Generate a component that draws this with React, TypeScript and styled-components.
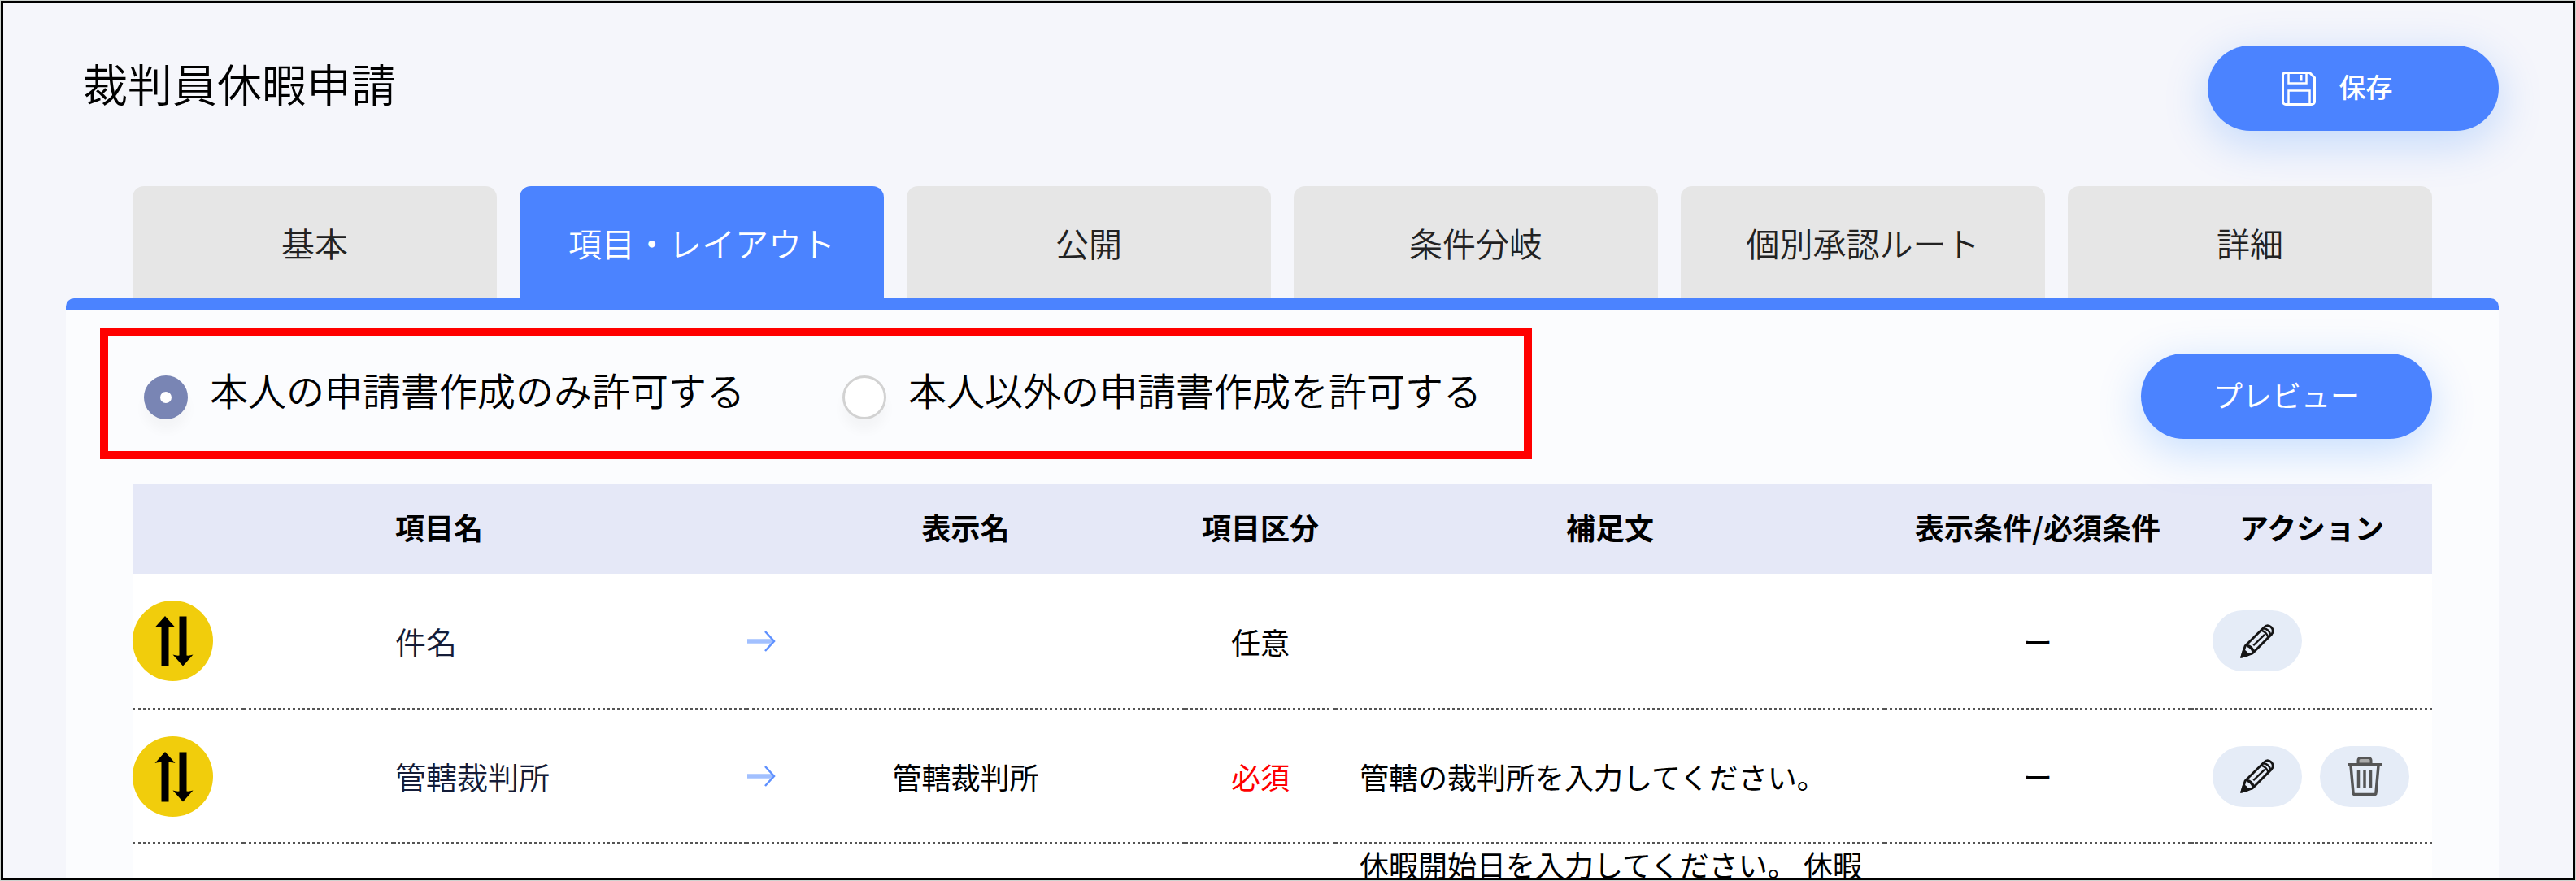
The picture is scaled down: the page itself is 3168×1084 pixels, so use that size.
import React, { useState } from "react";
import styled, { createGlobalStyle } from "styled-components";

const BLUE = "#4b83ff";

const GlobalStyle = createGlobalStyle`
  *, *::before, *::after { box-sizing: border-box; }
  body {
    margin: 0;
    color: #000;
    font-family: "Noto Sans CJK JP", sans-serif;
    font-size: 36px;
    font-weight: 400;
    line-height: 48px;
  }
  button { font: inherit; border: 0; padding: 0; cursor: pointer; }
`;

const Frame = styled.div`
  height: 100vh;
  border: 1px solid #ccd2ce;
  overflow: hidden;
`;

const Page = styled.main`
  height: 100%;
  border: 3px solid #000;
  background: #f5f6fb;
  padding: 52px 91px 0 77px;
  overflow: hidden;
`;

const Header = styled.header`
  display: flex;
  justify-content: space-between;
  align-items: flex-start;
  padding-left: 21px;
  margin-bottom: 68px;
`;

const Title = styled.h1`
  margin: 0;
  font-size: 55px;
  font-weight: 350;
  line-height: 90px;
`;

const PrimaryButton = styled.button<{ $withIcon?: boolean }>`
  display: flex;
  align-items: center;
  justify-content: center;
  gap: 29px;
  flex: none;
  width: 358px;
  height: 105px;
  padding-right: ${(p) => (p.$withIcon ? "40px" : "0")};
  border-radius: 53px;
  background: ${BLUE};
  color: #fff;
  box-shadow: 0 14px 55px rgba(0, 110, 255, 0.22);
`;

const ButtonLabel = styled.span<{ $strong?: boolean }>`
  padding-bottom: 6px;
  font-size: ${(p) => (p.$strong ? "33px" : "36px")};
  font-weight: ${(p) => (p.$strong ? 500 : 400)};
`;

const TabBar = styled.nav`
  display: grid;
  grid-template-columns: repeat(6, 1fr);
  gap: 28px;
  padding: 0 82px;
`;

const Tab = styled.button<{ $active: boolean }>`
  height: 138px;
  border-radius: 14px 14px 0 0;
  font-size: 41px;
  font-weight: 350;
  background: ${(p) => (p.$active ? BLUE : "#e6e6e6")};
  color: ${(p) => (p.$active ? "#fff" : "#222")};
`;

const Panel = styled.section`
  min-height: 100%;
  border-top: 14px solid ${BLUE};
  border-radius: 10px 10px 0 0;
  background: #fbfcfe;
  padding: 22px 82px 0 42px;
`;

const Toolbar = styled.div`
  display: flex;
  justify-content: space-between;
  align-items: flex-start;
  margin-bottom: 30px;
`;

const PreviewSlot = styled.div`
  padding-top: 32px;
`;

const RadioGroup = styled.fieldset`
  display: flex;
  gap: 120px;
  margin: 0;
  border: 10px solid #f00;
  padding: 29px 52px 39px 44px;
`;

const RadioLabel = styled.label`
  display: flex;
  align-items: flex-end;
  gap: 27px;
  font-size: 47px;
  font-weight: 350;
  line-height: 74px;
  white-space: nowrap;
  cursor: pointer;
`;

const Radio = styled.input`
  appearance: none;
  flex: none;
  width: 54px;
  height: 54px;
  margin: 0;
  border: 3px solid #d2d2d2;
  border-radius: 50%;
  background: #fff;
  box-shadow: 0 14px 14px rgba(0, 0, 0, 0.03);

  &:checked {
    border: 20px solid #7985b4;
  }
`;

const TableArea = styled.div`
  padding-left: 40px;
`;

const Table = styled.table`
  width: 100%;
  table-layout: fixed;
  border-collapse: separate;
  border-spacing: 0;
  background: #fff;
`;

const Col = styled.col<{ $w?: number }>`
  width: ${(p) => (p.$w ? `${p.$w}px` : "auto")};
`;

const HeadCell = styled.th<{ $left?: boolean }>`
  height: 111px;
  padding: 0 2px 6px;
  background: #e5e8f7;
  text-align: ${(p) => (p.$left ? "left" : "center")};
  font-weight: 700;
`;

const Row = styled.tr`
  &:first-child > td { height: 168px; }
`;

const Cell = styled.td<{ $left?: boolean }>`
  height: 165px;
  padding: 0 2px;
  border-bottom: 3px dotted #555;
  text-align: ${(p) => (p.$left ? "left" : "center")};
`;

const HandleCell = styled(Cell)`
  padding: 0;
`;

const NameCell = styled(Cell)`
  font-size: 38px;
  font-weight: 350;
  color: #141c38;
`;

const NoteCell = styled(Cell)<{ $top?: boolean }>`
  padding: 0 20px 0 29px;
  vertical-align: ${(p) => (p.$top ? "top" : "middle")};
`;

const DisplayName = styled.div`
  display: grid;
  grid-template-columns: 36px 1fr 36px;
  align-items: center;
`;

const Kind = styled.span<{ $required: boolean }>`
  color: ${(p) => (p.$required ? "#f00" : "#000")};
`;

const Handle = styled.button`
  display: block;
  width: 99px;
  height: 99px;
  border-radius: 50%;
  background: #f1cd0c;
  cursor: grab;
`;

const Actions = styled.div`
  display: flex;
  gap: 22px;
  padding-left: 24px;
`;

const ActionButton = styled.button`
  display: flex;
  align-items: center;
  justify-content: center;
  width: 110px;
  height: 75px;
  border-radius: 38px;
  background: #e5ecf7;
`;

const SaveIcon = () => (
  <svg width="42" height="42" viewBox="0 0 42 42" fill="none" stroke="#fff" strokeWidth="3">
    <path d="M4.500 1.500h30l6 6V37a3.500 3.500 0 0 1-3.500 3.500H5A3.500 3.500 0 0 1 1.500 37V4.500a3 3 0 0 1 3-3z" />
    <path d="M8.500 2v12.500h22V2" strokeWidth="2.500" />
    <path d="M24 4v7.500" />
    <path d="M8.500 40V23.500h26V40" strokeWidth="2.500" />
  </svg>
);

const SortIcon = () => (
  <svg width="99" height="99" viewBox="0 0 99 99" fill="#000">
    <path d="M40 19L52.500 33Q48 31.500 44.500 32V80.500h-9V32Q32 31.500 27.500 33z" />
    <path d="M57.500 19.500h9V67.500Q70 68 74.500 66.500L62 80.500 49.500 66.500Q54 68 57.500 67.500z" />
  </svg>
);

const ArrowIcon = () => (
  <svg width="36" height="28" viewBox="0 0 36 28" fill="none">
    <path d="M1 14h31" stroke="#a2c0ff" strokeWidth="5.500" />
    <path d="M23 2L34 14 23 26" stroke="#5f91ff" strokeWidth="2.500" />
  </svg>
);

const PencilIcon = () => (
  <svg width="42" height="42" viewBox="0 0 44 44" fill="none" stroke="#151515" strokeWidth="3">
    <path d="M2 42L6.500 28 31 4C33.500 1 37 1 40 4s3 7 0 9.500L16 37.500z" strokeLinejoin="round" />
    <path d="M0 44L3.500 32Q9 34 12 40.500z" fill="#151515" stroke="none" />
    <path d="M8.500 27.500Q15 29 17 35.500" strokeWidth="4" />
    <path d="M30 5.500q8 1 9 9" strokeWidth="2.500" />
    <path d="M27 8q7 2 9 9" strokeWidth="2.500" />
    <path d="M17 27.500L31.500 13.500" strokeWidth="2.500" />
  </svg>
);

const TrashIcon = () => (
  <svg width="44" height="48" viewBox="0 0 44 48" fill="none" stroke="#555" strokeWidth="3">
    <path d="M14 9V4.500A3 3 0 0 1 17 1.500h10a3 3 0 0 1 3 3V9z" fill="#aaa" />
    <path d="M1 10h42" strokeWidth="4" />
    <path d="M5 11l3 33.500a2 2 0 0 0 2 2h24a2 2 0 0 0 2-2L39 11" strokeWidth="3.500" />
    <path d="M14.500 17v21M22 17v21M29.500 17v21" strokeWidth="3.500" />
  </svg>
);

const TABS = ["基本", "項目・レイアウト", "公開", "条件分岐", "個別承認ルート", "詳細"];

const SCOPES = [
  { id: "self", label: "本人の申請書作成のみ許可する" },
  { id: "others", label: "本人以外の申請書作成を許可する" },
];

type Item = { name: string; display: string; required: boolean; note: string; removable: boolean };

const ITEMS: Item[] = [
  { name: "件名", display: "", required: false, note: "", removable: false },
  {
    name: "管轄裁判所",
    display: "管轄裁判所",
    required: true,
    note: "管轄の裁判所を入力してください。",
    removable: true,
  },
];

export default function App() {
  const [tab, setTab] = useState(1);
  const [scope, setScope] = useState("self");

  return (
    <Frame>
      <GlobalStyle />
      <Page>
        <Header>
          <Title>裁判員休暇申請</Title>
          <PrimaryButton type="button" $withIcon>
            <SaveIcon />
            <ButtonLabel $strong>保存</ButtonLabel>
          </PrimaryButton>
        </Header>
        <TabBar>
          {TABS.map((label, i) => (
            <Tab key={label} type="button" $active={i === tab} onClick={() => setTab(i)}>
              {label}
            </Tab>
          ))}
        </TabBar>
        <Panel>
          <Toolbar>
            <RadioGroup>
              {SCOPES.map((s) => (
                <RadioLabel key={s.id} htmlFor={s.id}>
                  <Radio
                    type="radio"
                    name="scope"
                    id={s.id}
                    checked={scope === s.id}
                    onChange={() => setScope(s.id)}
                  />
                  {s.label}
                </RadioLabel>
              ))}
            </RadioGroup>
            <PreviewSlot>
              <PrimaryButton type="button">
                <ButtonLabel>プレビュー</ButtonLabel>
              </PrimaryButton>
            </PreviewSlot>
          </Toolbar>
          <TableArea>
            <Table>
              <colgroup>
                <Col $w={136} />
                <Col $w={185} />
                <Col $w={434} />
                <Col $w={539} />
                <Col $w={186} />
                <Col />
                <Col $w={378} />
                <Col $w={296} />
              </colgroup>
              <thead>
                <tr>
                  <HeadCell />
                  <HeadCell />
                  <HeadCell $left>項目名</HeadCell>
                  <HeadCell>表示名</HeadCell>
                  <HeadCell>項目区分</HeadCell>
                  <HeadCell>補足文</HeadCell>
                  <HeadCell>表示条件/必須条件</HeadCell>
                  <HeadCell>アクション</HeadCell>
                </tr>
              </thead>
              <tbody>
                {ITEMS.map((item) => (
                  <Row key={item.name}>
                    <HandleCell>
                      <Handle type="button">
                        <SortIcon />
                      </Handle>
                    </HandleCell>
                    <Cell />
                    <NameCell $left>{item.name}</NameCell>
                    <HandleCell>
                      <DisplayName>
                        <ArrowIcon />
                        <span>{item.display}</span>
                      </DisplayName>
                    </HandleCell>
                    <Cell>
                      <Kind $required={item.required}>{item.required ? "必須" : "任意"}</Kind>
                    </Cell>
                    <NoteCell $left>{item.note}</NoteCell>
                    <Cell>ー</Cell>
                    <Cell>
                      <Actions>
                        <ActionButton type="button">
                          <PencilIcon />
                        </ActionButton>
                        {item.removable && (
                          <ActionButton type="button">
                            <TrashIcon />
                          </ActionButton>
                        )}
                      </Actions>
                    </Cell>
                  </Row>
                ))}
                <Row>
                  <Cell colSpan={5} />
                  <NoteCell $left $top>休暇開始日を入力してください。 休暇</NoteCell>
                  <Cell colSpan={2} />
                </Row>
              </tbody>
            </Table>
          </TableArea>
        </Panel>
      </Page>
    </Frame>
  );
}
